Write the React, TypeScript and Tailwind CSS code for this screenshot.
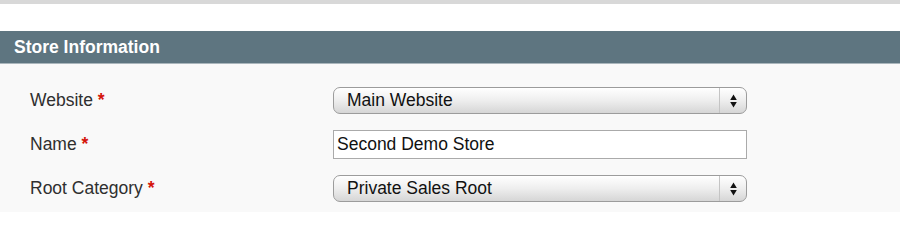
import { ReactNode } from "react";

function Label({ children }: { children: ReactNode }) {
  return (
    <div className="text-[17.5px] text-[#2f2f2f]">
      {children} <span className="text-[#d4140b] font-bold">*</span>
    </div>
  );
}

function Select({ value }: { value: string }) {
  return (
    <div className="flex h-[27px] w-[414px] items-stretch rounded-[7px] border border-[#9c9c9c] bg-gradient-to-b from-white via-[#eeeeee] to-[#d6d6d6] shadow-[inset_0_1px_0_#fff]">
      <div className="flex flex-1 items-center pl-[13px] text-[17.5px] text-[#111]">{value}</div>
      <div className="w-px bg-[#c4c4c4]" />
      <div className="flex w-[26px] items-center justify-center">
        <svg width="7" height="14" viewBox="0 0 7 14">
          <path d="M3.5 0.5 L6.8 6 L0.2 6 Z" fill="#111" />
          <path d="M3.5 13.5 L6.8 8 L0.2 8 Z" fill="#111" />
        </svg>
      </div>
    </div>
  );
}

export default function App() {
  return (
    <div className="h-[212px] w-[900px] overflow-hidden bg-white font-['Liberation_Sans',Arial,sans-serif]">
      <div className="h-[4px] bg-[#d8d8d8]" />
      <div className="h-[27px]" />
      <div className="flex h-[32px] items-center bg-[#5e7580] pl-[14px] text-[17.5px] font-bold text-white">
        Store Information
      </div>
      <div className="h-px bg-[#aab6bc]" />
      <div className="grid grid-cols-[303px_414px] items-center gap-y-[16px] bg-[#f9f9f9] pt-[23px] pb-[20px] pl-[30px]">
        <Label>Website</Label>
        <Select value="Main Website" />
        <Label>Name</Label>
        <div className="flex h-[29px] w-[414px] items-center border border-[#aaa] bg-white pl-[3px] text-[17.5px] text-[#111]">
          Second Demo Store
        </div>
        <Label>Root Category</Label>
        <Select value="Private Sales Root" />
      </div>
    </div>
  );
}
